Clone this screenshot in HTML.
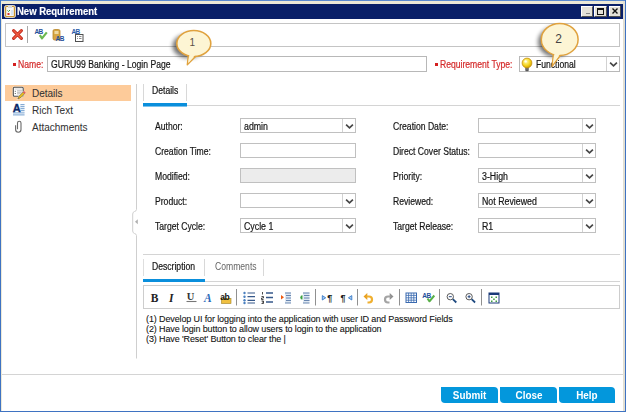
<!DOCTYPE html>
<html><head><meta charset="utf-8">
<style>
*{margin:0;padding:0;box-sizing:border-box}
html,body{width:626px;height:412px;overflow:hidden;background:#fff}
body{position:relative;font-family:"Liberation Sans",sans-serif;color:#222}
.a{position:absolute}
.t{position:absolute;white-space:nowrap;font-size:10px;line-height:12px;transform-origin:0 0;color:#161616;-webkit-text-stroke:.2px}
.n{transform:scaleX(.86)}
.box{position:absolute;border:1px solid #c0c0c0;background:#fff}
.dd{position:absolute;top:0;right:0;width:13px;height:100%;border-left:1px solid #d2d2d2}

.sep{position:absolute;width:1px;background:#a8a8a8}
.btn{position:absolute;top:387px;height:16px;background:#0397dc;color:#fff;font-weight:bold;font-size:11px;line-height:16px;text-align:center;border-radius:0 4px 0 4px}.btn span{display:inline-block;transform:scaleX(.9)}
</style></head><body>
<!-- frame -->
<div class="a" style="left:0;top:0;width:626px;height:412px;background:#fff"></div>
<div class="a" style="left:0;top:0;width:626px;height:1px;background:#5b8ad0"></div>
<div class="a" style="left:1px;top:1px;width:624px;height:3px;background:#ece9d8"></div>
<div class="a" style="left:0;top:0;width:1px;height:412px;background:#3f73c2"></div>
<div class="a" style="left:1px;top:1px;width:1px;height:410px;background:#ece9d8"></div>
<div class="a" style="left:623px;top:1px;width:2px;height:410px;background:#e2dfd3"></div>
<div class="a" style="left:625px;top:0;width:1px;height:412px;background:#3f73c2"></div>
<div class="a" style="left:0;top:411px;width:626px;height:1px;background:#3f73c2"></div>
<!-- title bar -->
<div class="a" style="left:2px;top:4px;width:621px;height:15px;background:#091f68"></div>
<svg class="a" style="left:4px;top:5px" width="12" height="13" viewBox="0 0 12 13">
<rect x="0.5" y="0.5" width="11" height="12" rx="2" fill="#f4ecd8" stroke="#dcd6c8" stroke-width="1"/>
<rect x="1" y="1" width="10" height="11" rx="1.5" fill="#c99632"/>
<rect x="2.2" y="2" width="7.6" height="9" fill="#f6f6f6"/>
<rect x="4" y="1" width="4" height="2" fill="#d8d8d8"/>
<path d="M3.5 5.5l1 1 1.5-1.5" stroke="#3aa03a" stroke-width="1" fill="none"/>
<rect x="3.5" y="8" width="2" height="2" fill="#d03030"/>
<rect x="7" y="5" width="2" height="5" fill="#d8e4f0"/>
</svg>
<div class="t" style="left:17px;top:6px;color:#fff;font-weight:bold;font-size:10px;line-height:12px;transform:scaleX(.95);-webkit-text-stroke:.15px">New Requirement</div>
<div class="a" style="left:581px;top:6px;width:12px;height:11px;background:#e4e1d8;border-top:1px solid #fff;border-left:1px solid #fff;border-right:1px solid #505050;border-bottom:1px solid #505050"><div class="a" style="left:4px;top:6px;width:4px;height:1px;background:#888"></div></div>
<div class="a" style="left:594px;top:6px;width:13px;height:11px;background:#e4e1d8;border-top:1px solid #fff;border-left:1px solid #fff;border-right:1px solid #505050;border-bottom:1px solid #505050"><div class="a" style="left:2px;top:1px;width:7px;height:7px;border:1px solid #111;border-top-width:2px"></div></div>
<svg class="a" style="left:609px;top:6px" width="12" height="11" viewBox="0 0 12 11"><rect x="0" y="0" width="12" height="11" fill="#505050"/><rect x="0" y="0" width="11" height="10" fill="#fff"/><rect x="1" y="1" width="10" height="9" fill="#e4e1d8"/><path d="M3.5 2.5L8.5 7.5M8.5 2.5L3.5 7.5" stroke="#111" stroke-width="1.4"/></svg>

<!-- toolbar -->
<div class="box" style="left:5px;top:23px;width:615px;height:24px;border-color:#c4c4c4"></div>
<svg class="a" style="left:12px;top:29px" width="11" height="11" viewBox="0 0 11 11"><path d="M1.6 1.6L9.4 9.4M9.4 1.6L1.6 9.4" stroke="#c0281a" stroke-width="3" stroke-linecap="round"/><path d="M1.8 1.8L9.2 9.2M9.2 1.8L1.8 9.2" stroke="#f05a40" stroke-width="1.4" stroke-linecap="round"/></svg>
<div class="sep" style="left:27px;top:26px;height:17px"></div>
<svg class="a" style="left:30px;top:24px" width="60" height="22" viewBox="30 24 60 22">
<text x="34.5" y="34" font-family="Liberation Sans" font-weight="bold" font-size="6.5" fill="#1f4f9a" letter-spacing="-0.6">AB</text>
<path d="M39.8 35.2l2.2 3.2 4.8-6" stroke="#6cb850" stroke-width="2.2" fill="none" stroke-linejoin="round"/>
<rect x="53" y="29.5" width="7" height="10.5" rx="1.5" fill="#d6a642" stroke="#b9862a" stroke-width=".8"/>
<rect x="54.5" y="31" width="4" height="3" fill="#efd9a0"/>
<text x="55.5" y="40.6" font-family="Liberation Sans" font-weight="bold" font-size="6.5" fill="#1f4f9a" letter-spacing="-0.5">AB</text>
<text x="71.5" y="34" font-family="Liberation Sans" font-weight="bold" font-size="6.5" fill="#2a5aa8" letter-spacing="-0.6">AB</text>
<rect x="75.5" y="34.5" width="7.5" height="7" fill="#fff" stroke="#505050" stroke-width="1"/>
<path d="M77 36.5h1M79 36.5h2.5M77 38.5h1M79 38.5h2.5" stroke="#707070" stroke-width=".8"/>
</svg>

<!-- name row -->
<div class="a" style="left:13px;top:63px;width:3px;height:3px;background:#d42020"></div>
<div class="t n" style="left:18px;top:59px;color:#d42a2a">Name:</div>
<div class="box" style="left:47px;top:56px;width:380px;height:16px;border-color:#b8b8b8"></div>
<div class="t n" style="left:51px;top:59px">GURU99 Banking - Login Page</div>
<div class="a" style="left:435px;top:63px;width:3px;height:3px;background:#d42020"></div>
<div class="t n" style="left:440px;top:59px;color:#d42a2a">Requirement Type:</div>
<div class="box" style="left:519px;top:56px;width:101px;height:16px;border-color:#b8b8b8"><div class="dd"><svg class="a" style="left:0;top:0" width="12" height="13" viewBox="0 0 12 13"><path d="M3.1 5.6L6.5 8.8L9.9 5.6" fill="none" stroke="#474747" stroke-width="1.7"/></svg></div></div>
<div class="t n" style="left:535.6px;top:59px">Functional</div>
<svg class="a" style="left:520px;top:57px" width="13" height="15" viewBox="0 0 13 15"><defs><radialGradient id="bg" cx=".4" cy=".35" r=".7"><stop offset="0" stop-color="#fffbb0"/><stop offset=".6" stop-color="#f4d21a"/><stop offset="1" stop-color="#c89a00"/></radialGradient></defs>
<rect x="5.2" y="9.5" width="3.6" height="4" fill="#6a6a6a"/><rect x="5.6" y="13.2" width="2.8" height="1" fill="#444"/>
<circle cx="7" cy="6" r="4.9" fill="url(#bg)" stroke="#c89010" stroke-width=".8"/>
<circle cx="5.6" cy="4.4" r="1.2" fill="#fff" opacity=".85"/></svg>

<!-- left nav -->
<div class="a" style="left:5px;top:85px;width:126px;height:16px;background:#fdcb9a"></div>
<svg class="a" style="left:12px;top:86px" width="14" height="48" viewBox="12 86 14 48">
<rect x="12.5" y="86.5" width="11.5" height="10.5" rx="1.5" fill="#fff" opacity=".8"/>
<rect x="13.3" y="87.3" width="9.9" height="8.9" rx="1" fill="#fff" stroke="#4e4e4e" stroke-width="1.1"/>
<path d="M14.5 89h7.5" stroke="#d0d0d0" stroke-width="1"/>
<path d="M15.3 90.8v1M15.3 93v1" stroke="#606060" stroke-width="1"/>
<path d="M17 90.8h5M17 92.3h5M17 93.8h4" stroke="#a8a8a8" stroke-width=".8"/>
<path d="M17.8 99l1.2-2.8 4.2-4.2 1.6 1.6-4.2 4.2z" fill="#e8c020" stroke="#fff" stroke-width="1.4" stroke-opacity=".7"/>
<path d="M17.8 99l1.2-2.8 4.2-4.2 1.6 1.6-4.2 4.2z" fill="#e8c020" stroke="#6a5020" stroke-width=".6"/>
<path d="M23.4 91.6l1.7 1.7" stroke="#e06060" stroke-width="1.8"/>
<rect x="20" y="104" width="4.5" height="8.5" fill="#e4edf6"/>
<path d="M20.5 104.5h4M20.5 106.5h4M20.5 108.5h4M20.5 110.5h4" stroke="#7aa4d0" stroke-width=".9"/>
<rect x="13" y="112" width="11.5" height="4" fill="#dde8f3"/>
<path d="M13 112.8h11.5M13 114.8h11.5" stroke="#8cb0d8" stroke-width=".9"/>
<text x="12.7" y="111.8" font-family="Liberation Sans" font-weight="bold" font-size="11" fill="#0a2868" stroke="#0a2868" stroke-width=".35">A</text>
<path d="M15.6 125.2V129.6A2.7 2.7 0 0 0 21 129.6V123A1.75 1.75 0 0 0 17.5 123V129.2" stroke="#6a6a6a" stroke-width="1.1" fill="none"/>
</svg>
<div class="t" style="left:32px;top:88px;color:#333;-webkit-text-stroke:.05px">Details</div>
<div class="t" style="left:32px;top:105px;color:#333;-webkit-text-stroke:.05px">Rich Text</div>
<div class="t" style="left:32px;top:122px;color:#333;-webkit-text-stroke:.05px">Attachments</div>
<svg class="a" style="left:128px;top:83px" width="12" height="277" viewBox="128 83 12 277">
<path d="M136.5 84V209.5q0 1.5-2 2q-1.7.5-1.8 2.5V231q.1 2 1.8 2.5q2 .5 2 2V358.5" stroke="#cfcfcf" stroke-width="1" fill="none"/>
<path d="M137.8 219.3v5l-2.8-2.5z" fill="#b0b0b0"/>
</svg>

<!-- details tab -->
<div class="a" style="left:143px;top:84px;width:1px;height:17px;background:#d8d8d8"></div>
<div class="a" style="left:186px;top:84px;width:1px;height:17px;background:#d8d8d8"></div>
<div class="t n" style="left:152px;top:85px">Details</div>
<div class="a" style="left:143px;top:105px;width:477px;height:1px;background:#d4d4d4"></div>
<div class="a" style="left:143px;top:103px;width:44px;height:4px;background:linear-gradient(#0a8fdc 0,#0a8fdc 75%,#7cc2ec 75%)"></div>

<!-- form -->
<div class="t n" style="left:154.6px;top:121px">Author:</div>
<div class="t n" style="left:154.6px;top:146px">Creation Time:</div>
<div class="t n" style="left:154.6px;top:171px">Modified:</div>
<div class="t n" style="left:154.6px;top:196px">Product:</div>
<div class="t n" style="left:154.6px;top:221px">Target Cycle:</div>
<div class="box" style="left:240px;top:118px;width:116px;height:15px"><div class="dd"><svg class="a" style="left:0;top:0" width="12" height="13" viewBox="0 0 12 13"><path d="M3.1 5.6L6.5 8.8L9.9 5.6" fill="none" stroke="#474747" stroke-width="1.7"/></svg></div></div>
<div class="box" style="left:240px;top:143px;width:116px;height:15px"></div>
<div class="box" style="left:240px;top:168px;width:116px;height:15px;background:#ececec"></div>
<div class="box" style="left:240px;top:193px;width:116px;height:15px"><div class="dd"><svg class="a" style="left:0;top:0" width="12" height="13" viewBox="0 0 12 13"><path d="M3.1 5.6L6.5 8.8L9.9 5.6" fill="none" stroke="#474747" stroke-width="1.7"/></svg></div></div>
<div class="box" style="left:240px;top:218px;width:116px;height:15px"><div class="dd"><svg class="a" style="left:0;top:0" width="12" height="13" viewBox="0 0 12 13"><path d="M3.1 5.6L6.5 8.8L9.9 5.6" fill="none" stroke="#474747" stroke-width="1.7"/></svg></div></div>
<div class="t n" style="left:244px;top:121px;transform:scaleX(.88)">admin</div>
<div class="t n" style="left:244px;top:221px;transform:scaleX(.88)">Cycle 1</div>

<div class="t n" style="left:393px;top:121px">Creation Date:</div>
<div class="t n" style="left:393px;top:146px">Direct Cover Status:</div>
<div class="t n" style="left:393px;top:171px">Priority:</div>
<div class="t n" style="left:393px;top:196px">Reviewed:</div>
<div class="t n" style="left:393px;top:221px">Target Release:</div>
<div class="box" style="left:478px;top:118px;width:118px;height:15px"><div class="dd"><svg class="a" style="left:0;top:0" width="12" height="13" viewBox="0 0 12 13"><path d="M3.1 5.6L6.5 8.8L9.9 5.6" fill="none" stroke="#474747" stroke-width="1.7"/></svg></div></div>
<div class="box" style="left:478px;top:143px;width:118px;height:15px"><div class="dd"><svg class="a" style="left:0;top:0" width="12" height="13" viewBox="0 0 12 13"><path d="M3.1 5.6L6.5 8.8L9.9 5.6" fill="none" stroke="#474747" stroke-width="1.7"/></svg></div></div>
<div class="box" style="left:478px;top:168px;width:118px;height:15px"><div class="dd"><svg class="a" style="left:0;top:0" width="12" height="13" viewBox="0 0 12 13"><path d="M3.1 5.6L6.5 8.8L9.9 5.6" fill="none" stroke="#474747" stroke-width="1.7"/></svg></div></div>
<div class="box" style="left:478px;top:193px;width:118px;height:15px"><div class="dd"><svg class="a" style="left:0;top:0" width="12" height="13" viewBox="0 0 12 13"><path d="M3.1 5.6L6.5 8.8L9.9 5.6" fill="none" stroke="#474747" stroke-width="1.7"/></svg></div></div>
<div class="box" style="left:478px;top:218px;width:118px;height:15px"><div class="dd"><svg class="a" style="left:0;top:0" width="12" height="13" viewBox="0 0 12 13"><path d="M3.1 5.6L6.5 8.8L9.9 5.6" fill="none" stroke="#474747" stroke-width="1.7"/></svg></div></div>
<div class="t n" style="left:482px;top:171px;transform:scaleX(.88)">3-High</div>
<div class="t n" style="left:482px;top:196px;transform:scaleX(.88)">Not Reviewed</div>
<div class="t n" style="left:482px;top:221px;transform:scaleX(.88)">R1</div>

<!-- description -->
<div class="a" style="left:143px;top:254px;width:477px;height:1px;background:#d4d4d4"></div>
<div class="a" style="left:143px;top:259px;width:1px;height:17px;background:#dedede"></div>
<div class="a" style="left:204px;top:259px;width:1px;height:17px;background:#d8d8d8"></div>
<div class="a" style="left:263px;top:259px;width:1px;height:17px;background:#d8d8d8"></div>
<div class="t n" style="left:152px;top:261px">Description</div>
<div class="t n" style="left:214.5px;top:261px;color:#666;-webkit-text-stroke:0">Comments</div>
<div class="a" style="left:143px;top:281px;width:477px;height:1px;background:#d4d4d4"></div>
<div class="a" style="left:143px;top:279px;width:62px;height:3px;background:#0a8fdc"></div>
<div class="box" style="left:143px;top:285px;width:477px;height:24px;border-color:#cdcdcd"></div>
<svg class="a" style="left:143px;top:285px" width="380" height="24" viewBox="143 285 380 24">
<text x="150.8" y="301.6" font-family="Liberation Serif" font-weight="bold" font-size="11.5" fill="#222">B</text>
<text x="169" y="301.6" font-family="Liberation Serif" font-style="italic" font-weight="bold" font-size="11.5" fill="#222">I</text>
<text x="186.8" y="300" font-family="Liberation Serif" font-weight="bold" font-size="10.5" fill="#333">U</text>
<path d="M186.5 301.5h10" stroke="#777" stroke-width="1.1"/>
<text x="204" y="301.6" font-family="Liberation Serif" font-style="italic" font-weight="bold" font-size="11.5" fill="#2a68b8">A</text>
<rect x="221.5" y="298.5" width="9.5" height="5" fill="#f0c040" stroke="#a08020" stroke-width=".6"/>
<text x="220.3" y="299.6" font-family="Liberation Sans" font-weight="bold" font-size="8.5" fill="#111" letter-spacing="-.4">ab</text>
<path d="M236.5 289v16.5M315.5 289v16.5M357.5 289v16.5M399.5 289v16.5M439.5 289v16.5M481.5 289v16.5" stroke="#909090" stroke-width="1"/>
<g fill="#4a80c0"><circle cx="244.5" cy="293" r="1.2"/><circle cx="244.5" cy="296.7" r="1.2"/><circle cx="244.5" cy="300.3" r="1.2"/><circle cx="244.5" cy="303" r="1.2"/></g>
<path d="M247.5 293h7.5M247.5 296.7h7.5M247.5 300.3h7.5M247.5 303h7.5" stroke="#36588a" stroke-width="1.2"/>
<path d="M262.5 292v2.5M261.5 296.5h2v1.5h-2v1.5h2M261.5 301h2v1h-1.5M263.5 302v1.5h-2" stroke="#222" stroke-width=".8" fill="none"/>
<path d="M266 293h7M266 297.5h7M266 302h7" stroke="#36588a" stroke-width="1.3"/>
<path d="M281 295l3 2.3-3 2.3z" fill="#f05a10"/>
<rect x="285" y="292.5" width="6" height="10.5" fill="#dfe8f2"/>
<path d="M285 293h6M286 295.5h5M286 298h5M286 300.5h5M285 303h6" stroke="#5a7aa8" stroke-width=".9"/>
<path d="M302.5 295.2a2.2 2.2 0 0 0 0 4.4z" fill="#3aa040"/>
<rect x="303" y="292.5" width="6.5" height="10.5" fill="#dfe8f2"/>
<path d="M303 293h6.5M304 295.5h5.5M304 298h5.5M304 300.5h5.5M303 303h6.5" stroke="#5a7aa8" stroke-width=".9"/>
<path d="M322.3 295.6v4.4l3.4-2.2z" fill="#a8cdf0" stroke="#3a7ac8" stroke-width=".9" stroke-linejoin="round"/>
<text x="327.3" y="301.3" font-family="Liberation Sans" font-weight="bold" font-size="9" fill="#1a1a1a">¶</text>
<text x="340.6" y="301.3" font-family="Liberation Sans" font-weight="bold" font-size="9" fill="#1a1a1a">¶</text>
<path d="M351.8 295.6v4.4l-3.4-2.2z" fill="#a8cdf0" stroke="#3a7ac8" stroke-width=".9" stroke-linejoin="round"/>
<path d="M363.5 296.5l3.8-3.6v7.2z" fill="#e8a020"/>
<path d="M366.5 296.5h2.5a3 3 0 0 1 0 6h-1.5" fill="none" stroke="#f0b030" stroke-width="2.2"/>
<path d="M393.5 296.5l-3.8-3.6v7.2z" fill="#909090"/>
<path d="M390.5 296.5h-2.5a3 3 0 0 0 0 6h1.5" fill="none" stroke="#a4a4a4" stroke-width="2.2"/>
<rect x="406" y="293" width="10.5" height="9.5" fill="#fff" stroke="#3a6ab0" stroke-width="1"/>
<path d="M408.6 293v9.5M411.2 293v9.5M413.8 293v9.5M406 295.4h10.5M406 297.8h10.5M406 300.2h10.5" stroke="#3a6ab0" stroke-width=".8"/>
<text x="422.3" y="298.2" font-family="Liberation Sans" font-weight="bold" font-size="6.5" fill="#1f4f9a" letter-spacing="-.6">AB</text>
<path d="M427.5 298.5l2 2.8 4.8-5.8" stroke="#58b048" stroke-width="2" fill="none" stroke-linejoin="round"/>
<circle cx="450.3" cy="296.7" r="3.2" fill="#fff" stroke="#5a5a5a" stroke-width="1"/>
<path d="M448.8 296.7h3" stroke="#2a4a80" stroke-width="1"/>
<path d="M452.8 299.2l3.5 3.3" stroke="#1e4a80" stroke-width="1.8"/>
<circle cx="469.1" cy="296.7" r="3.2" fill="#fff" stroke="#5a5a5a" stroke-width="1"/>
<path d="M467.6 296.7h3M469.1 295.2v3" stroke="#2a4a80" stroke-width="1"/>
<path d="M471.6 299.2l3.5 3.3" stroke="#1e4a80" stroke-width="1.8"/>
<rect x="489" y="293" width="10" height="10" fill="#fff" stroke="#1a3a78" stroke-width="1"/>
<rect x="489" y="293" width="10" height="2" fill="#1a3a78"/>
<g fill="#40a040"><rect x="491" y="296.5" width="1.5" height="1.5"/><rect x="495.5" y="296.5" width="1.5" height="1.5"/><rect x="493.2" y="298.5" width="1.5" height="1.5"/><rect x="491" y="300.5" width="1.5" height="1.5"/><rect x="495.5" y="300.5" width="1.5" height="1.5"/></g>
</svg>

<div class="t" style="left:146px;top:314px;font-size:9px;line-height:10px;letter-spacing:-.12px;-webkit-text-stroke:.08px;color:#111">(1) Develop UI for logging into the application with user ID and Password Fields<br>(2) Have login button to allow users to login to the application<br>(3) Have 'Reset' Button to clear the |</div>

<!-- bottom -->
<div class="a" style="left:2px;top:374px;width:621px;height:1px;background:#d4d4d4"></div>
<div class="btn" style="left:441px;width:57px"><span>Submit</span></div>
<div class="btn" style="left:500px;width:57px"><span>Close</span></div>
<div class="btn" style="left:559px;width:56px"><span>Help</span></div>

<!-- callouts -->
<svg class="a" style="left:150px;top:15px" width="90" height="60" viewBox="150 15 90 60">
<defs><filter id="bl" x="-50%" y="-50%" width="200%" height="200%"><feGaussianBlur stdDeviation="2"/></filter></defs>
<ellipse cx="188.5" cy="46" rx="16" ry="12" fill="#000" opacity=".55" filter="url(#bl)"/>
<path d="M188.5 54 L187.3 64.8 L196.5 55.5 Z" fill="#fdf5d4" stroke="#e0a23e" stroke-width="1.4" stroke-linejoin="round"/>
<ellipse cx="193.8" cy="43.5" rx="17" ry="13" fill="#fdf5d4" stroke="#e0a23e" stroke-width="1.6"/>
<path d="M189.5 54 L188.2 63.2 L195 55" fill="#fdf5d4"/>
<text x="192.3" y="46" font-size="10" font-family="Liberation Sans" fill="#5a5045" text-anchor="middle">1</text>
</svg>
<svg class="a" style="left:520px;top:15px" width="70" height="55" viewBox="520 15 70 55">
<defs><filter id="bl2" x="-50%" y="-50%" width="200%" height="200%"><feGaussianBlur stdDeviation="2"/></filter></defs>
<ellipse cx="555" cy="42" rx="17" ry="15" fill="#000" opacity=".55" filter="url(#bl2)"/>
<path d="M553.5 53 L552.1 66.3 L561 54.5 Z" fill="#fdf5d4" stroke="#e0a23e" stroke-width="1.4" stroke-linejoin="round"/>
<ellipse cx="559.7" cy="39.4" rx="18.4" ry="16" fill="#fdf5d4" stroke="#e0a23e" stroke-width="1.5"/>
<path d="M554.5 53 L553 64 L560 54" fill="#fdf5d4"/>
<text x="558.5" y="43" font-size="12" font-family="Liberation Sans" fill="#444" text-anchor="middle">2</text>
</svg>
</body></html>
